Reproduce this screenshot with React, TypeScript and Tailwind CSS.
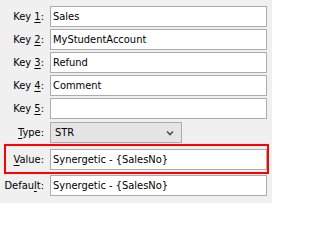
import React from "react";

const font = { fontFamily: '"DejaVu Sans Condensed", "Liberation Sans", sans-serif' };

function Label({ pre, u, post, w = "w-[44px]" }: { pre: string; u: string; post: string; w?: string }) {
  return (
    <div className={`${w} shrink-0 text-right whitespace-nowrap text-black`}>
      {pre}
      <span className="underline underline-offset-[2px] decoration-1">{u}</span>
      {post}
    </div>
  );
}

function Input({ value }: { value: string }) {
  return (
    <div className="w-[217px] h-[21px] border border-[#acacac] bg-white pl-[2px] flex items-center text-black whitespace-nowrap overflow-hidden">
      {value}
    </div>
  );
}

export default function App() {
  const rows = [
    { n: "1", v: "Sales" },
    { n: "2", v: "MyStudentAccount" },
    { n: "3", v: "Refund" },
    { n: "4", v: "Comment" },
    { n: "5", v: "" },
  ];
  return (
    <div className="w-[272px] h-[203px] bg-[#f0f0f0] pt-[6px] text-[11px] leading-none overflow-hidden" style={font}>
      {rows.map((r) => (
        <div key={r.n} className="flex items-center gap-[6px] mb-[2px]">
          <Label pre="Key " u={r.n} post=":" />
          <Input value={r.v} />
        </div>
      ))}
      <div className="flex items-center gap-[6px] mt-[3px]">
        <Label pre="" u="T" post="ype:" />
        <div className="w-[132px] h-[21px] border border-[#acacac] bg-[#e5e5e5] pl-[4px] pr-[7px] flex items-center justify-between text-black">
          <span>STR</span>
          <svg width="8" height="6" viewBox="0 0 8 6">
            <path d="M1 1.5 L4 4.5 L7 1.5" fill="none" stroke="#505050" strokeWidth="1.6" />
          </svg>
        </div>
      </div>
      <div className="ml-[4px] w-[265px] h-[30px] mt-[1px] border-2 border-[#ff0000] flex items-center gap-[6px]">
        <Label pre="" u="V" post="alue:" w="w-[38px]" />
        <Input value="Synergetic - {SalesNo}" />
      </div>
      <div className="flex items-center gap-[6px] mt-[1px]">
        <Label pre="Defau" u="l" post="t:" />
        <Input value="Synergetic - {SalesNo}" />
      </div>
    </div>
  );
}
